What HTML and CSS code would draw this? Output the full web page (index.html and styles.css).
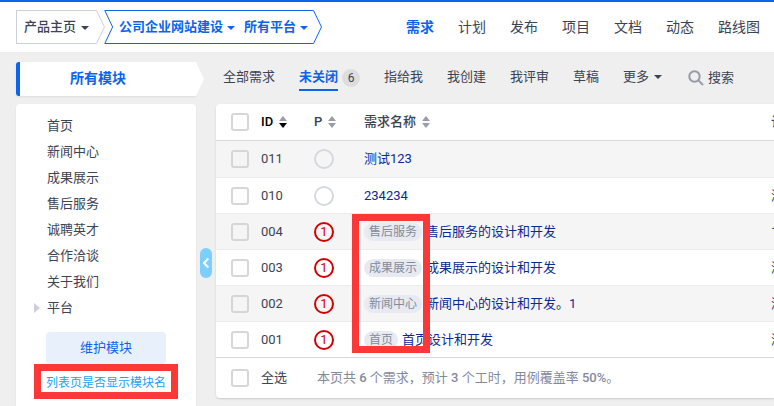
FILE: index.html
```html
<!DOCTYPE html>
<html lang="zh-CN">
<head>
<meta charset="utf-8">
<title>需求</title>
<link rel="stylesheet" href="styles.css">
</head>
<body>
<header class="topbar">
  <div class="crumbs">
    <div class="crumb crumb-home">
      <button type="button">产品主页<span class="caret"></span></button>
      <svg class="tip" width="9" height="34" viewBox="0 0 9 34"><path d="M0 .5H.5L8.5 17L.5 33.5H0"/></svg>
    </div>
    <div class="crumb crumb-current">
      <svg class="notch" width="10" height="34" viewBox="0 0 10 34"><path d="M10 .5H.8L8.6 17L.8 33.5H10"/></svg>
      <button type="button">公司企业网站建设<span class="caret"></span></button>
      <button type="button">所有平台<span class="caret"></span></button>
      <svg class="tip" width="9" height="34" viewBox="0 0 9 34"><path d="M0 .5H.5L8.5 17L.5 33.5H0"/></svg>
    </div>
  </div>
  <nav class="nav">
    <a class="active" href="#">需求</a>
    <a href="#">计划</a>
    <a href="#">发布</a>
    <a href="#">项目</a>
    <a href="#">文档</a>
    <a href="#">动态</a>
    <a href="#">路线图</a>
  </nav>
</header>
<div class="page">
  <aside class="side">
    <div class="side-title">所有模块<svg class="side-tip" width="8" height="34" viewBox="0 0 8 34"><path d="M0 0L8 17L0 34Z"/></svg></div>
    <div class="side-card">
      <ul class="modules">
        <li><a href="#">首页</a></li>
        <li><a href="#">新闻中心</a></li>
        <li><a href="#">成果展示</a></li>
        <li><a href="#">售后服务</a></li>
        <li><a href="#">诚聘英才</a></li>
        <li><a href="#">合作洽谈</a></li>
        <li><a href="#">关于我们</a></li>
        <li class="parent"><a href="#">平台</a></li>
      </ul>
      <button class="maintain" type="button">维护模块</button>
      <div class="link-frame"><a href="#">列表页是否显示模块名</a></div>
    </div>
    <button class="collapse" type="button" aria-label="收起"><svg width="8" height="12" viewBox="0 0 8 12"><path d="M6.3 1.5L2 6L6.3 10.5"/></svg></button>
  </aside>
  <main class="main">
    <nav class="tabs">
      <a href="#">全部需求</a>
      <a class="active" href="#"><span class="label">未关闭</span><span class="count">6</span></a>
      <a href="#">指给我</a>
      <a href="#">我创建</a>
      <a href="#">我评审</a>
      <a href="#">草稿</a>
      <a href="#">更多<span class="caret"></span></a>
      <a class="search" href="#"><svg width="16" height="16" viewBox="0 0 16 16"><circle cx="6.5" cy="6.5" r="5.2"/><path d="M10.4 10.4L15 15"/></svg>搜索</a>
    </nav>
    <div class="card">
      <table class="stories">
        <colgroup><col class="c-check"><col class="c-id"><col class="c-pri"><col class="c-name"><col class="c-plan"></colgroup>
        <thead>
          <tr>
            <th><input type="checkbox" aria-label="全选"></th>
            <th class="sorted">ID<svg class="sort" width="10" height="12" viewBox="0 0 10 12"><path class="up" d="M1 5L5 0L9 5Z"/><path class="down" d="M1 7H9L5 12Z"/></svg></th>
            <th>P<svg class="sort" width="10" height="12" viewBox="0 0 10 12"><path d="M1 5L5 0L9 5Z"/><path d="M1 7H9L5 12Z"/></svg></th>
            <th>需求名称<svg class="sort" width="10" height="12" viewBox="0 0 10 12"><path d="M1 5L5 0L9 5Z"/><path d="M1 7H9L5 12Z"/></svg></th>
            <th>计划</th>
          </tr>
        </thead>
        <tbody>
          <tr><td><input type="checkbox" aria-label="011"></td><td>011</td><td><span class="pri"></span></td><td><a href="#">测试123</a></td><td></td></tr>
          <tr><td><input type="checkbox" aria-label="010"></td><td>010</td><td><span class="pri"></span></td><td><a href="#">234234</a></td><td>测试</td></tr>
          <tr><td><input type="checkbox" aria-label="004"></td><td>004</td><td><span class="pri p1">1</span></td><td><span class="tag">售后服务</span><a href="#">售后服务的设计和开发</a></td><td>1</td></tr>
          <tr><td><input type="checkbox" aria-label="003"></td><td>003</td><td><span class="pri p1">1</span></td><td><span class="tag">成果展示</span><a href="#">成果展示的设计和开发</a></td><td>测试</td></tr>
          <tr><td><input type="checkbox" aria-label="002"></td><td>002</td><td><span class="pri p1">1</span></td><td><span class="tag">新闻中心</span><a href="#">新闻中心的设计和开发。1</a></td><td>测试</td></tr>
          <tr><td><input type="checkbox" aria-label="001"></td><td>001</td><td><span class="pri p1">1</span></td><td><span class="tag">首页</span><a href="#">首页设计和开发</a></td><td>测试</td></tr>
        </tbody>
      </table>
      <div class="foot">
        <label><input type="checkbox">全选</label>
        <p>本页共 <strong>6</strong> 个需求，预计 <strong>3</strong> 个工时，用例覆盖率 <strong>50%</strong>。</p>
      </div>
      <div class="tag-frame"></div>
    </div>
  </main>
</div>
</body>
</html>
```
FILE: styles.css
```css
* { box-sizing: border-box; }
body {
  margin: 0;
  height: 100vh;
  overflow: hidden;
  display: flex;
  flex-direction: column;
  background: #efefef;
  color: #3c4353;
  font: 13px/20px Roboto, "Noto Sans CJK SC", sans-serif;
}
a { color: inherit; text-decoration: none; }
button { font: inherit; color: inherit; border: 0; padding: 0; background: none; }
svg { flex: none; }

.caret {
  display: inline-block;
  border: 4px solid transparent;
  border-top-color: currentColor;
  border-bottom: 0;
  margin-left: 5px;
  vertical-align: 2px;
}

.topbar {
  flex: none;
  display: flex;
  justify-content: space-between;
  height: 52px;
  padding: 8px 14px 8px 16px;
  background: #fff;
  border-top: 2px solid #0c64eb;
}
.crumbs { display: flex; gap: 18px; }
.crumb {
  position: relative;
  display: flex;
  align-items: center;
  height: 34px;
  border: 1px solid #cbd0db;
  border-right: 0;
  font-weight: 500;
}
.crumb svg { position: absolute; top: -1px; fill: none; stroke: #cbd0db; }
.crumb .tip { left: 100%; }
.crumb-home { padding: 0 7px; }
.crumb .caret { margin-left: 5px; vertical-align: 1px; }
.crumb-current {
  gap: 9px;
  padding: 0 5px;
  border-color: #0c64eb;
  border-left: 0;
  color: #0c64eb;
  font-weight: 700;
}
.crumb-current svg { stroke: #0c64eb; }
.crumb .notch { right: 100%; }
.crumb-current .caret { margin-left: 4px; }

.nav { display: flex; gap: 24px; font-size: 14px; line-height: 34px; }
.nav .active { color: #0c64eb; font-weight: 700; }

.page { flex: 1; min-height: 0; display: flex; gap: 20px; padding: 10px 0 0 16px; }

.side { position: relative; flex: none; width: 180px; display: flex; flex-direction: column; gap: 8px; }
.side-title {
  position: relative;
  height: 34px;
  line-height: 32px;
  padding-right: 20px;
  border-left: 4px solid #0c64eb;
  border-radius: 3px 0 0 3px;
  background: #fff;
  color: #0c64eb;
  font-size: 14px;
  font-weight: 700;
  text-align: center;
  box-shadow: 0 1px 2px rgba(0, 0, 0, .08);
}
.side-tip { position: absolute; left: 100%; top: 0; fill: #fff; }
.side-card {
  flex: 1;
  padding: 9px 18px 0;
  background: #fff;
  border-radius: 4px 4px 0 0;
  box-shadow: 0 1px 2px rgba(0, 0, 0, .08);
}
.modules { list-style: none; margin: 0; padding: 0 13px; line-height: 26px; }
.parent { position: relative; }
.parent::before {
  content: "";
  position: absolute;
  left: -13px;
  top: 8px;
  border: 5px solid transparent;
  border-left: 6px solid #cbd0db;
  border-right: 0;
}
.maintain {
  display: block;
  width: 120px;
  height: 32px;
  margin: 11px 12px 0;
  border-radius: 4px;
  background: #e8f0fc;
  color: #0c64eb;
}
.link-frame {
  width: 144px;
  border: 7px solid #fb3838;
  padding: 3px 5px 0;
  color: #1ba1f7;
  font-size: 12px;
  line-height: 18px;
  white-space: nowrap;
}
.collapse {
  position: absolute;
  left: 184px;
  top: 186px;
  width: 12px;
  height: 30px;
  display: flex;
  align-items: center;
  justify-content: center;
  border-radius: 6px;
  background: #7ccffd;
}
.collapse path { fill: none; stroke: #fff; stroke-width: 2; }

.main { flex: 1; min-width: 0; }
.tabs { display: flex; gap: 24px; height: 42px; padding-left: 7px; line-height: 30px; white-space: nowrap; }
.tabs .active { display: flex; gap: 4px; }
.tabs .label { height: 29px; border-bottom: 2px solid #0c64eb; color: #0c64eb; font-weight: 700; }
.count {
  width: 18px;
  height: 18px;
  margin-top: 7px;
  border-radius: 9px;
  background: #ddd;
  font-size: 12px;
  line-height: 18px;
  text-align: center;
}
.search { display: flex; gap: 4px; margin-left: 2px; line-height: 32px; }
.search svg { margin-top: 8px; fill: none; stroke: #989ba5; stroke-width: 2; }

.card {
  position: relative;
  background: #fff;
  border-radius: 4px 0 0 4px;
  box-shadow: 0 1px 2px rgba(0, 0, 0, .15);
}
.stories { width: 100%; table-layout: fixed; border-collapse: separate; border-spacing: 0; }
.c-check { width: 45px; }
.c-id { width: 53px; }
.c-pri { width: 50px; }
.c-plan { width: 3px; }
.stories th, .stories td { padding: 0; height: 36px; text-align: left; overflow: hidden; white-space: nowrap; }
.stories th { height: 37px; border-bottom: 1px solid #d8d8d8; font-weight: 500; }
.stories th:first-child, .stories td:first-child { padding-left: 15px; }
.stories tbody tr + tr td { border-top: 1px solid #ebebeb; }
.stories tbody tr:nth-child(odd) { background: #f5f5f5; }
.stories td a { color: #0c2a96; }
.stories .sorted { color: #000; }
.sort { margin-left: 5px; vertical-align: -2px; fill: #9a9da8; }
.sorted .down { fill: #000; }

input[type="checkbox"] {
  appearance: none;
  display: block;
  width: 18px;
  height: 18px;
  margin: 0;
  border: 2px solid #d6d6d6;
  border-radius: 3px;
}
.pri {
  display: block;
  width: 20px;
  height: 20px;
  border: 2px solid #d5d8df;
  border-radius: 50%;
  line-height: 16px;
  text-align: center;
}
.p1 { border-color: #d50000; color: #d50000; }
.tag {
  display: inline-block;
  height: 18px;
  margin-right: 4px;
  padding: 0 5px;
  border-radius: 9px;
  background: #e7eaf0;
  color: #838a9d;
  font-size: 12px;
  line-height: 18px;
}

.foot { display: flex; align-items: center; gap: 30px; height: 41px; padding-left: 15px; border-top: 1px solid #d8d8d8; }
.foot label { display: flex; align-items: center; gap: 12px; }
.foot p { margin: 0; color: #838a9d; }
.foot strong { font-weight: 500; }
.tag-frame { position: absolute; left: 136px; top: 110px; width: 78px; height: 139px; border: 7px solid #fb3838; }
```
